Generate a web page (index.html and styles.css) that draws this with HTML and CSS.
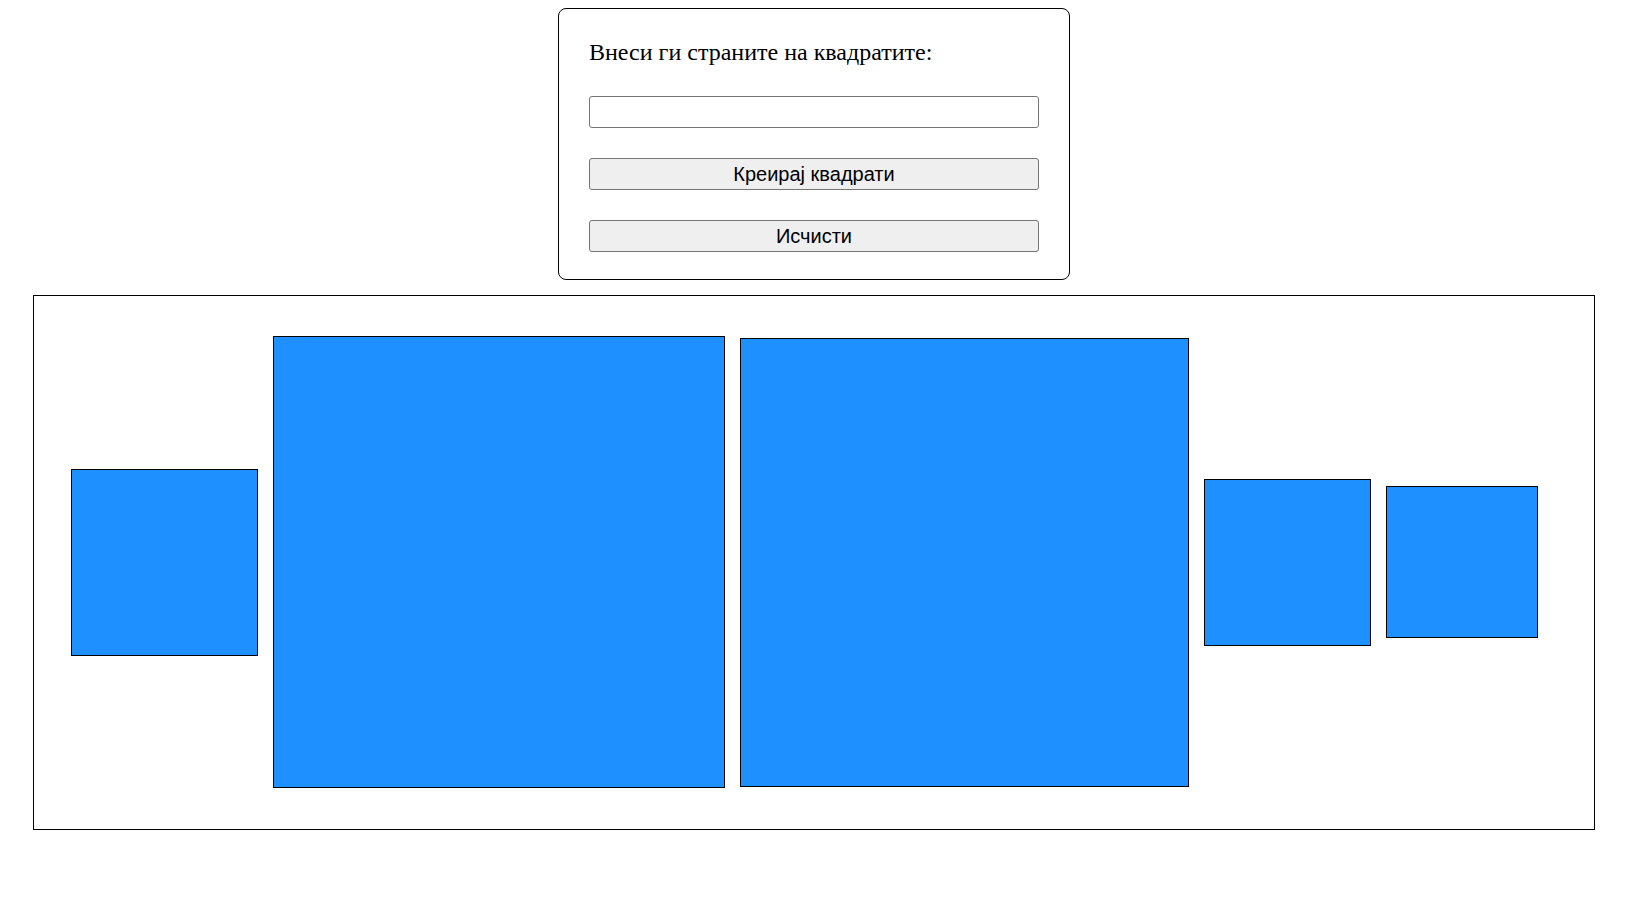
FILE: index.html
```html
<!DOCTYPE html>
<html lang="mk">
<head>
<meta charset="utf-8">
<title>Квадрати</title>
<link rel="stylesheet" href="styles.css">
</head>
<body>
  <div class="page">
    <div class="panel">
      <label class="title" for="sides">Внеси ги страните на квадратите:</label>
      <input class="field" id="sides" type="text">
      <button class="btn" type="button">Креирај квадрати</button>
      <button class="btn" type="button">Исчисти</button>
    </div>
    <div class="board">
      <div class="square" style="width:187px;height:187px"></div>
      <div class="square" style="width:452px;height:452px"></div>
      <div class="square" style="width:449px;height:449px"></div>
      <div class="square" style="width:167px;height:167px"></div>
      <div class="square" style="width:152px;height:152px"></div>
    </div>
  </div>
</body>
</html>
```

FILE: styles.css
```css
html, body {
  margin: 0;
  padding: 0;
  background: #ffffff;
}

body {
  padding: 8px;
  font-family: "Liberation Serif", "Times New Roman", serif;
  color: #000;
}

.page {
  width: 1612px;
}

.panel {
  box-sizing: border-box;
  width: 512px;
  margin: 0 auto;
  padding: 30px 30px 27px 30px;
  border: 1px solid #000;
  border-radius: 8px;
  display: flex;
  flex-direction: column;
  gap: 30px;
}

.title {
  display: block;
  font-family: "Liberation Serif", "Times New Roman", serif;
  font-size: 24px;
  line-height: 27px;
  height: 27px;
}

.field {
  box-sizing: border-box;
  height: 32px;
  width: 100%;
  margin: 0;
  padding: 1px 4px;
  border: 1px solid #767676;
  border-radius: 3px;
  font-family: "Liberation Sans", Arial, sans-serif;
  font-size: 20px;
  background: #fff;
}

.btn {
  box-sizing: border-box;
  height: 32px;
  width: 100%;
  margin: 0;
  padding: 0;
  border: 1px solid #767676;
  border-radius: 3px;
  background: #efefef;
  color: #000;
  font-family: "Liberation Sans", Arial, sans-serif;
  font-size: 20px;
  line-height: 30px;
}

.board {
  box-sizing: border-box;
  margin: 15px 25px 0 25px;
  height: 535px;
  padding: 0 0 1px 37px;
  border: 1px solid #000;
  display: flex;
  align-items: center;
  gap: 15px;
}

.square {
  box-sizing: border-box;
  flex: none;
  background: #1e90ff;
  border: 1px solid #000;
}
```
